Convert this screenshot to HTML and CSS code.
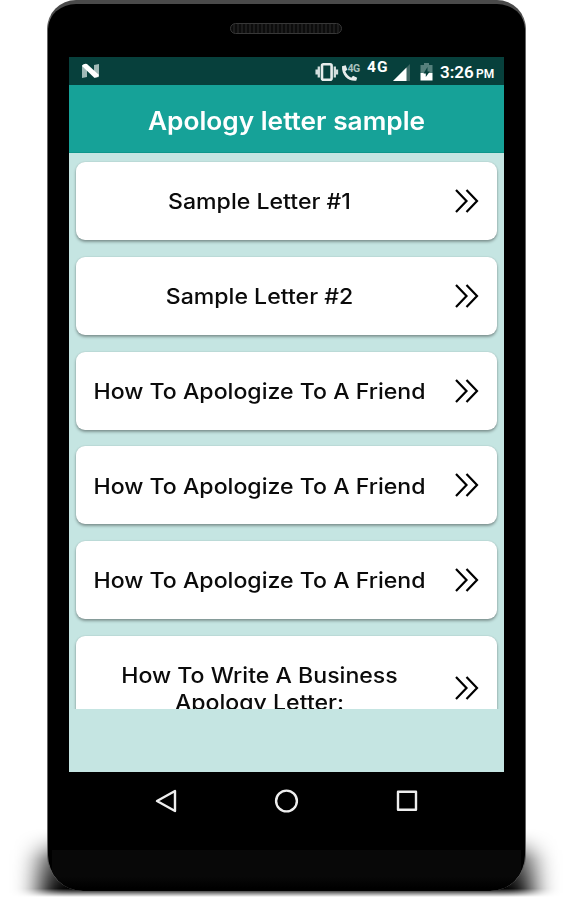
FILE: index.html
```html
<!DOCTYPE html>
<html lang="en">
<head>
    <meta charset="UTF-8" />
    <title>Apology letter sample</title>
    <link rel="stylesheet" href="styles.css">
</head>
<body>
    <svg class="symbols">
        <symbol id="more" viewBox="0 0 26 26">
            <path d="M2 2l10.500 11L2 24M12.500 2L23 13 12.500 24" fill="none" stroke="#000" stroke-width="2.2" />
        </symbol>
    </svg>
    <div id="wrap">
        <div class="shadow"></div>
        <div class="phone">
            <div class="top"><span class="speaker"></span></div>
            <div class="screen">
                <div class="status">
                    <svg class="logo" width="20" height="16" viewBox="0 0 20 16">
                        <path d="M1 2l5-1v13l-5 1zM13 2l5-1v13l-5 1z" fill="#9fb9b6" />
                        <path d="M1 3q2-3 5-2l12 11q-1 3-5 2.500z" fill="#fff" />
                    </svg>
                    <svg class="vibrate" width="24" height="20" viewBox="0 0 24 20">
                        <rect x="7" y="2.2" width="9.6" height="15.6" rx="1.5" fill="none" stroke="#e6eceb" stroke-width="2.6" />
                        <path d="M3.8 4.500v11M19.800 4.500v11M1.6 7.500v5M22 7.500v5" stroke="#d4dfde" stroke-width="2.300" />
                    </svg>
                    <svg class="call" width="20" height="20" viewBox="0 0 20 20">
                        <path d="M1 4.200l3.700-1 1.600 4.600-2 1.500c1.200 3 3 5 6 6.400l1.700-1.900 4.200 1.900-1 3C7 19.500 .5 13 1 4.200z" fill="#e6eceb" />
                        <text x="6.500" y="9.800">4G</text>
                    </svg>
                    <span class="net">4G</span>
                    <svg class="signal" width="18" height="18" viewBox="0 0 18 18">
                        <path d="M17 0v17H0z" fill="#3d6663" />
                        <path d="M13.500 3.500V17H0z" fill="#fff" />
                    </svg>
                    <svg class="battery" width="13" height="18" viewBox="0 0 13 18">
                        <path d="M4 0h5v2h3.500v8H.5V2H4z" fill="#55807c" />
                        <path d="M.5 10h12v7.500H.5z" fill="#fff" />
                        <path d="M7.500 4L3.500 10.500h2.300V14l4-5.500H7.500z" fill="#07403c" />
                    </svg>
                    <span class="time">3:26</span><span class="pm">PM</span>
                </div>
                <header><h1>Apology letter sample</h1></header>
                <ul class="list">
                    <li><p>Sample Letter #1</p><svg class="more"><use href="#more" /></svg></li>
                    <li><p>Sample Letter #2</p><svg class="more"><use href="#more" /></svg></li>
                    <li><p>How To Apologize To A Friend</p><svg class="more"><use href="#more" /></svg></li>
                    <li><p>How To Apologize To A Friend</p><svg class="more"><use href="#more" /></svg></li>
                    <li><p>How To Apologize To A Friend</p><svg class="more"><use href="#more" /></svg></li>
                    <li class="two"><p>How To Write A Business<br>Apology Letter:</p><svg class="more"><use href="#more" /></svg></li>
                </ul>
            </div>
            <nav>
                <svg width="24" height="26" viewBox="0 0 24 26"><path d="M20 3v20L2 13z" /></svg>
                <svg width="26" height="26" viewBox="0 0 26 26"><circle cx="12.500" cy="13" r="10.400" /></svg>
                <svg width="24" height="26" viewBox="0 0 24 26"><rect x="4" y="3.800" width="18" height="18" /></svg>
            </nav>
            <div class="chin"></div>
        </div>
    </div>
</body>
</html>
```

FILE: styles.css
```css
*{
    box-sizing: border-box;
}
body,h1,ul,p{
    margin: 0;
    padding: 0;
}
body{
    background: #fff;
    font-family: Inter, "Liberation Sans", sans-serif;
}
.symbols{
    display: none;
}
#wrap{
    width: 571px;
    height: 900px;
    padding-left: 47px;
    position: relative;
    overflow: hidden;
}
/* floor shadow behind the phone */
.shadow{
    position: absolute;
    left: 4px;
    top: 828px;
    width: 564px;
    height: 69px;
    overflow: hidden;
    -webkit-mask-image: linear-gradient(transparent, rgba(0,0,0,.7) 45%, #000 88%, transparent);
    mask-image: linear-gradient(transparent, rgba(0,0,0,.7) 45%, #000 88%, transparent);
}
.shadow:before{
    content: "";
    position: absolute;
    left: 36px;
    right: 36px;
    top: 10px;
    height: 90px;
    border-radius: 20px;
    background: #000;
    filter: blur(13px);
}
.phone{
    position: relative;
    width: 479px;
    height: 891px;
    padding: 0 21px;
    background: #000;
    border: 1px solid #666;
    border-top: 4px solid #4a4a4a;
    border-bottom: 0;
    border-radius: 29px 29px 36px 36px;
    overflow: hidden;
}
.top{
    height: 53px;
    padding-top: 19px;
}
.speaker{
    display: block;
    width: 112px;
    height: 11px;
    margin: 0 auto 0 161px;
    border: 1px solid #383838;
    border-radius: 6px;
    background: repeating-linear-gradient(90deg, #0c0c0c 0 2px, #1c1c1c 2px 4px);
}
.screen{
    width: 435px;
    height: 715px;
    background: #c5e5e2;
}
.status{
    display: flex;
    align-items: center;
    height: 28px;
    background: #07403c;
    color: #fff;
    padding-left: 12px;
    font-family: Roboto, sans-serif;
}
.status svg,.status span{
    flex: none;
}
.vibrate{
    margin-left: 214px;
    margin-top: 1px;
}
.call{
    margin: 1px 0 0 2px;
}
.call text{
    font-size: 10.5px;
    font-weight: 700;
    letter-spacing: -.5px;
    fill: #a9c1be;
}
.net{
    width: 22px;
    margin: -9px 0 0 6px;
    font-size: 15.5px;
    line-height: 20px;
    font-weight: 700;
    letter-spacing: 1px;
}
.signal{
    margin: 3px 0 0 4px;
}
.battery{
    margin: 1px 0 0 9px;
}
.time{
    margin: 2px 0 0 7px;
    width: 34px;
    font-size: 17px;
    line-height: 20px;
    font-weight: 600;
}
.pm{
    margin: 5px 0 0 2px;
    font-size: 12px;
    line-height: 14px;
    font-weight: 600;
}
header{
    height: 68px;
    background: #16a298;
    border-bottom: 1px solid #0d968b;
}
h1{
    color: #fff;
    font-size: 25px;
    line-height: 72px;
    font-weight: 600;
    text-align: center;
    transform: scaleX(1.05);
}
.list{
    height: 556px;
    padding: 9px 7px 0;
    overflow: hidden;
    list-style: none;
}
.list li{
    display: flex;
    align-items: center;
    min-height: 78px;
    margin-bottom: 16.8px;
    padding: 0 17px 0 7px;
    background: #fff;
    border-radius: 9px;
    box-shadow: 0 2px 3px rgba(0,0,0,.34), 0 0 2px rgba(0,0,0,.12);
}
/* stretched a little, the lettering is wide */
.list p{
    flex: 1;
    padding-top: 3px;
    font-size: 21px;
    line-height: 26.5px;
    font-weight: 500;
    text-align: center;
    color: #0b0b0b;
    white-space: nowrap;
    transform: scaleX(1.1);
}
.list .two{
    min-height: 105px;
}
.more{
    flex: none;
    width: 26px;
    height: 26px;
    margin-left: 18px;
}
nav{
    display: flex;
    justify-content: space-between;
    padding: 16px 86px 0 86px;
}
nav svg{
    fill: none;
    stroke: #eee;
    stroke-width: 2.4;
    stroke-linejoin: round;
}
.chin{
    height: 38px;
    margin: 36px -17px 0;
    background: linear-gradient(#080808 70%, #000);
}
```
